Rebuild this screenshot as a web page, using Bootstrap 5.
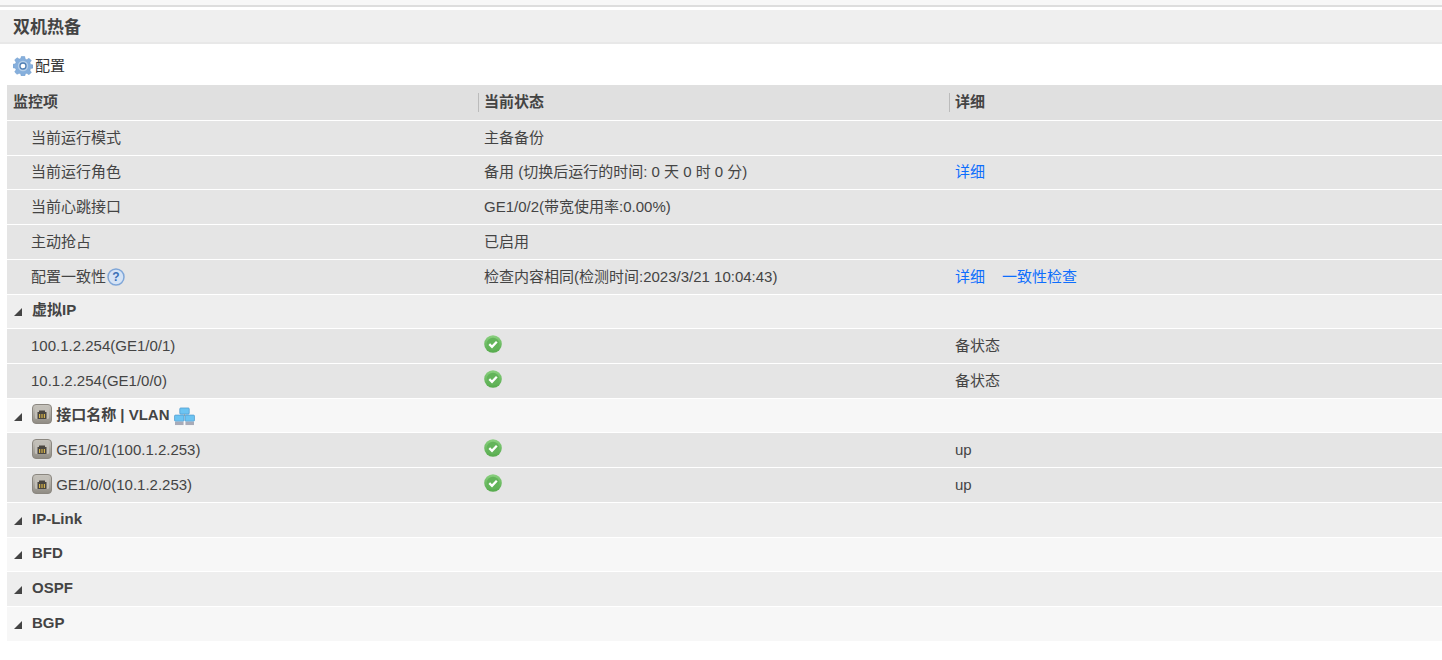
<!DOCTYPE html>
<html lang="zh">
<head>
<meta charset="utf-8">
<title>双机热备</title>
<link href="https://cdn.jsdelivr.net/npm/bootstrap@5.3.0/dist/css/bootstrap.min.css" rel="stylesheet">
<style>
html,body{height:660px;overflow:hidden;background:#fff}
body{font-family:"Liberation Sans","Noto Sans CJK SC",sans-serif;font-size:15px;color:#444}
.topstrip{background:#f7f7f7;border-bottom:2px solid #ddd;box-sizing:content-box;height:5px}
.titlebar{margin-top:3px;height:34px;background:#efefef;border-bottom:2px solid #e8e8e8;padding-left:13px;font-size:17px;font-weight:700;line-height:35px;color:#444}
.toolbar{height:41px;padding-left:13px;padding-top:3px;color:#333;gap:2px}
.wrap{padding-left:7px}
.hatable{table-layout:fixed;width:100%;margin:0;border-collapse:separate;border-spacing:0;color:#444;font-size:15px}
.hatable td,.hatable th{padding:0 6px;height:34.72px;vertical-align:middle;border:0;border-bottom:1px solid #fff;background:#e5e5e5;color:#444;box-shadow:none}
.hatable th{background:#e0e0e0;height:36px;position:relative}
.hatable th+th::before{content:"";position:absolute;left:0;top:8px;bottom:8px;width:1px;background:#bbb}
.c1{width:471px}.c2{width:471px}
.hatable td.ind{padding-left:24px}
.hatable tr.grp td{font-weight:700;padding-bottom:2px}
.hatable tr.g1 td{background:#eee}
.hatable tr.g2 td{background:#f7f7f7}
.hatable tr.g2 td.ifhead{padding-bottom:0}
.tri{display:inline-block;width:0;height:0;border-style:solid;border-width:0 0 8px 8px;border-color:transparent transparent #444 transparent;margin-right:10px;margin-left:1px;vertical-align:-1px}
.hatable a{color:#0d6efd;text-decoration:none}
.lk2{margin-left:17px}
.ico{vertical-align:-4px;display:inline-block}
.helpico{vertical-align:-4px;margin-left:1px}
.helpcell{padding-top:2px!important}
.portico{margin-left:1px}
.netico{vertical-align:-6px}
.okico{vertical-align:0;margin-top:2px}
</style>
</head>
<body>
<svg width="0" height="0" class="d-block">
<defs>
<linearGradient id="gPort" x1="0" y1="0" x2="0" y2="1"><stop offset="0" stop-color="#c9c6bf"/><stop offset="1" stop-color="#8f8b83"/></linearGradient>
<linearGradient id="gOk" x1="0" y1="0" x2="0" y2="1"><stop offset="0" stop-color="#8ad07f"/><stop offset="1" stop-color="#55aa4c"/></linearGradient>
<symbol id="port" viewBox="0 0 20 20"><rect x=".5" y=".5" width="19" height="19" rx="3.500" fill="url(#gPort)" stroke="#8b8780"/><rect x="3" y="3" width="14" height="12" rx="1.500" fill="#c2bfb8"/><path d="M7 6.500h6V8h1.500v7h-9V8H7z" fill="#4a4640"/><path d="M7 10h1.200v4H7zM9.400 10h1.200v4H9.400zM11.800 10H13v4h-1.200z" fill="#d4b24a"/></symbol>
<symbol id="okmark" viewBox="0 0 18 18"><circle cx="9" cy="9" r="8.800" fill="url(#gOk)"/><circle cx="9" cy="9" r="6.200" fill="#63b45a"/><path d="M5.300 9.200l2.700 2.600 4.800-5" fill="none" stroke="#fff" stroke-width="2.300"/></symbol>
</defs>
</svg>
<div class="topstrip"></div>
<div class="titlebar">双机热备</div>
<div class="toolbar d-flex align-items-center">
<svg width="20" height="20" viewBox="0 0 20 20" class="ico"><path d="M8.300 .5h3.400l.5 2.500 1.600.7 2.200-1.400 2.300 2.300-1.400 2.200.7 1.600 2.400.5v3.200l-2.400.5-.7 1.600 1.400 2.200-2.300 2.300-2.200-1.400-1.600.7-.5 2.400H8.300l-.5-2.400-1.600-.7L4 18.300 1.700 16l1.400-2.200-.7-1.600L0 11.700V8.300l2.400-.5.7-1.600L1.700 4 4 1.700l2.200 1.400 1.600-.7z" fill="#86afdc" stroke="#6d9bcc" stroke-width=".5"/><circle cx="10" cy="10" r="5.200" fill="#b4cee9"/><circle cx="10" cy="10" r="3" fill="#fff" stroke="#4f7fb5" stroke-width="1.300"/></svg>
<span>配置</span>
</div>
<div class="wrap">
<table class="table hatable">
<colgroup><col class="c1"><col class="c2"><col></colgroup>
<thead><tr><th>监控项</th><th>当前状态</th><th>详细</th></tr></thead>
<tbody>
<tr><td class="ind">当前运行模式</td><td>主备备份</td><td></td></tr>
<tr><td class="ind">当前运行角色</td><td>备用 (切换后运行的时间: 0 天 0 时 0 分)</td><td><a href="#">详细</a></td></tr>
<tr><td class="ind">当前心跳接口</td><td>GE1/0/2(带宽使用率:0.00%)</td><td></td></tr>
<tr><td class="ind">主动抢占</td><td>已启用</td><td></td></tr>
<tr><td class="ind helpcell">配置一致性<svg width="18" height="18" viewBox="0 0 18 18" class="helpico"><circle cx="9" cy="9" r="8" fill="#d5e3f5" stroke="#7fa6d8" stroke-width="1.500"/><text x="9" y="13" text-anchor="middle" font-size="12" font-weight="700" fill="#3a6fb5" font-family="Liberation Sans">?</text></svg></td><td class="helpcell">检查内容相同(检测时间:2023/3/21 10:04:43)</td><td class="helpcell"><a href="#">详细</a><a href="#" class="lk2">一致性检查</a></td></tr>
<tr class="grp g1"><td><span class="tri"></span>虚拟IP</td><td></td><td></td></tr>
<tr><td class="ind">100.1.2.254(GE1/0/1)</td><td><svg width="18" height="18" class="okico"><use href="#okmark"/></svg></td><td>备状态</td></tr>
<tr><td class="ind">10.1.2.254(GE1/0/0)</td><td><svg width="18" height="18" class="okico"><use href="#okmark"/></svg></td><td>备状态</td></tr>
<tr class="grp g2"><td class="ifhead"><span class="tri"></span><svg width="20" height="20" class="ico"><use href="#port"/></svg> 接口名称 | VLAN <svg width="21" height="19" viewBox="0 0 22 20" class="netico"><rect x="6" y="1" width="10" height="6.500" rx="1" fill="#6cc4f2" stroke="#4a94c8" stroke-width=".7"/><path d="M11 7.500v2" stroke="#8aa" stroke-width="1"/><rect x=".5" y="8.500" width="10" height="6.500" rx="1" fill="#6cc4f2" stroke="#4a94c8" stroke-width=".7"/><rect x="11.500" y="8.500" width="10" height="6.500" rx="1" fill="#6cc4f2" stroke="#4a94c8" stroke-width=".7"/><rect x="1" y="15.500" width="9" height="3.500" fill="#a8abb8"/><rect x="12" y="15.500" width="9" height="3.500" fill="#a8abb8"/></svg></td><td></td><td></td></tr>
<tr><td class="ind"><svg width="20" height="20" class="ico portico"><use href="#port"/></svg> GE1/0/1(100.1.2.253)</td><td><svg width="18" height="18" class="okico"><use href="#okmark"/></svg></td><td>up</td></tr>
<tr><td class="ind"><svg width="20" height="20" class="ico portico"><use href="#port"/></svg> GE1/0/0(10.1.2.253)</td><td><svg width="18" height="18" class="okico"><use href="#okmark"/></svg></td><td>up</td></tr>
<tr class="grp g1"><td><span class="tri"></span>IP-Link</td><td></td><td></td></tr>
<tr class="grp g2"><td><span class="tri"></span>BFD</td><td></td><td></td></tr>
<tr class="grp g1"><td><span class="tri"></span>OSPF</td><td></td><td></td></tr>
<tr class="grp g2"><td><span class="tri"></span>BGP</td><td></td><td></td></tr>
</tbody>
</table>
</div>
<script src="https://cdn.jsdelivr.net/npm/bootstrap@5.3.0/dist/js/bootstrap.bundle.min.js"></script>
</body>
</html>
